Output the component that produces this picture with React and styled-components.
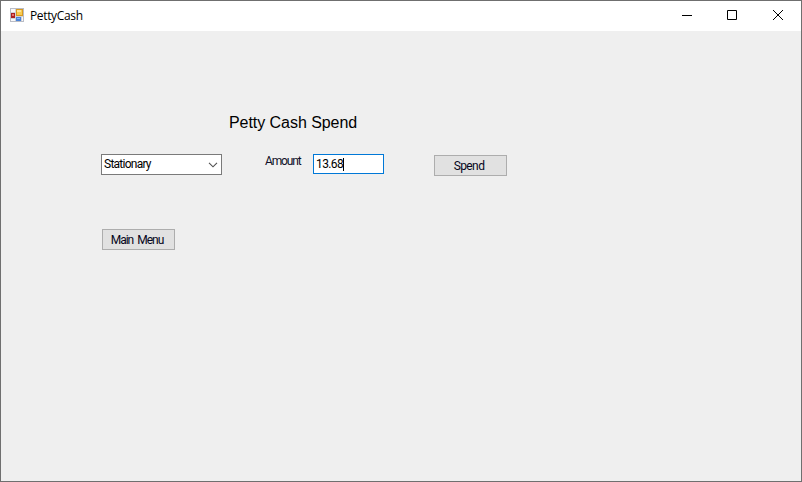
import React from 'react';
import styled, { createGlobalStyle } from 'styled-components';

const GlobalStyle = createGlobalStyle`
  * { box-sizing: border-box; }
  body { margin: 0; overflow: hidden; }
`;

const Window = styled.main`
  display: flex;
  flex-direction: column;
  width: 802px;
  height: 482px;
  border: 1px solid #6f6f6f;
  background: #efefef;
  color: #000;
  font: 12px/14px Roboto, sans-serif;
`;

const TitleBar = styled.header`
  display: flex;
  align-items: center;
  height: 30px;
  flex: none;
  padding-left: 9px;
  background: #fff;
`;

const LogoSvg = styled.svg`
  margin-bottom: 2px;
`;

const WindowTitle = styled.span`
  margin-left: 5px;
  font: 12px/16px 'Open Sans', sans-serif;
  letter-spacing: ${(p) => p.$tracking};
`;

const Controls = styled.div`
  display: flex;
  margin-left: auto;
`;

const ControlButton = styled.button`
  display: grid;
  place-items: center;
  width: 46px;
  height: 30px;
  padding: 0 0 2px;
  border: 0;
  background: transparent;
`;

const Form = styled.section`
  display: flex;
  flex-direction: column;
  align-items: flex-start;
  padding: 81px 0 0 100px;
`;

const Heading = styled.h1`
  margin: 0 0 0 128px;
  font: 400 16px/22px 'Liberation Sans', Arial, sans-serif;
  letter-spacing: ${(p) => p.$tracking};
  white-space: nowrap;
`;

const FieldRow = styled.div`
  display: flex;
  align-items: flex-start;
  margin-top: 20px;
  height: 22px;
`;

const Select = styled.div`
  display: flex;
  align-items: center;
  justify-content: space-between;
  width: 121px;
  height: 21px;
  padding: 0 3px 1px 2px;
  border: 1px solid #7a7a7a;
  background: #fff;
`;

const Chevron = styled.svg`
  margin-top: 1px;
`;

const Text = styled.span`
  letter-spacing: ${(p) => p.$tracking || '0'};
  word-spacing: 2px;
  white-space: nowrap;
`;

const Label = styled.label`
  width: 48px;
  margin-left: 43px;
  color: #101028;
`;

const AmountBox = styled.div`
  display: flex;
  align-items: center;
  width: 71px;
  height: 20px;
  padding-left: 2px;
  border: 1px solid #0078d7;
  background: #fff;
`;

const Caret = styled.i`
  width: 1px;
  height: 13px;
  background: #000;
`;

const Button = styled.button`
  width: 73px;
  height: 21px;
  padding: 0 3px 0 0;
  margin: ${(p) => p.$margin};
  border: 1px solid #adadad;
  background: #e1e1e1;
  color: #060620;
  font: inherit;
`;

function AppIcon() {
  return (
    <LogoSvg width="15" height="15" viewBox="0 0 15 15" shapeRendering="crispEdges">
      <path d="M.5 .5h13v13H.5z" fill="#f8f8fa" stroke="#b9bcc5" />
      <path d="M5 1v12M1 4.5h4M1 10.5h4M5 8.5h8M11.5 9v4" stroke="#d0d2d8" fill="none" />
      <path d="M6 1h7v7H6z" fill="#d89a20" />
      <path d="M7 2h5v5H7z" fill="#f8cb4f" />
      <path d="M7 2h4v2H7z" fill="#ffe394" />
      <path d="M1 5h4v5H1z" fill="#aa2022" />
      <path d="M2 6h2v2H2z" fill="#e8706c" />
      <path d="M6 9h5v4H6z" fill="#4b83d8" />
      <path d="M7 10h3v1H7z" fill="#8bb8f5" />
    </LogoSvg>
  );
}

export default function App() {
  return (
    <>
      <GlobalStyle />
      <Window>
        <TitleBar>
          <AppIcon />
          <WindowTitle $tracking="-0.35px">PettyCash</WindowTitle>
          <Controls>
            <ControlButton aria-label="Minimize">
              <svg width="12" height="10"><path d="M2 5.5h10" stroke="#000" /></svg>
            </ControlButton>
            <ControlButton aria-label="Maximize">
              <svg width="10" height="10"><path d="M.5 .5h9v9h-9z" stroke="#000" fill="none" /></svg>
            </ControlButton>
            <ControlButton aria-label="Close">
              <svg width="10" height="10"><path d="M0 0l10 10M10 0L0 10" stroke="#000" /></svg>
            </ControlButton>
          </Controls>
        </TitleBar>
        <Form>
          <Heading $tracking="-0.05px">Petty Cash Spend</Heading>
          <FieldRow>
            <Select>
              <Text $tracking="-0.75px">Stationary</Text>
              <Chevron width="10" height="6"><path d="M1 .8l4 4 4-4" stroke="#505050" strokeWidth="1.1" fill="none" /></Chevron>
            </Select>
            <Label><Text $tracking="-1.15px">Amount</Text></Label>
            <AmountBox>
              <Text $tracking="-0.6px">13.68</Text>
              <Caret />
            </AmountBox>
            <Button $margin="1px 0 0 50px"><Text $tracking="-0.6px">Spend</Text></Button>
          </FieldRow>
          <Button $margin="53px 0 0 1px"><Text $tracking="-1px">Main Menu</Text></Button>
        </Form>
      </Window>
    </>
  );
}
